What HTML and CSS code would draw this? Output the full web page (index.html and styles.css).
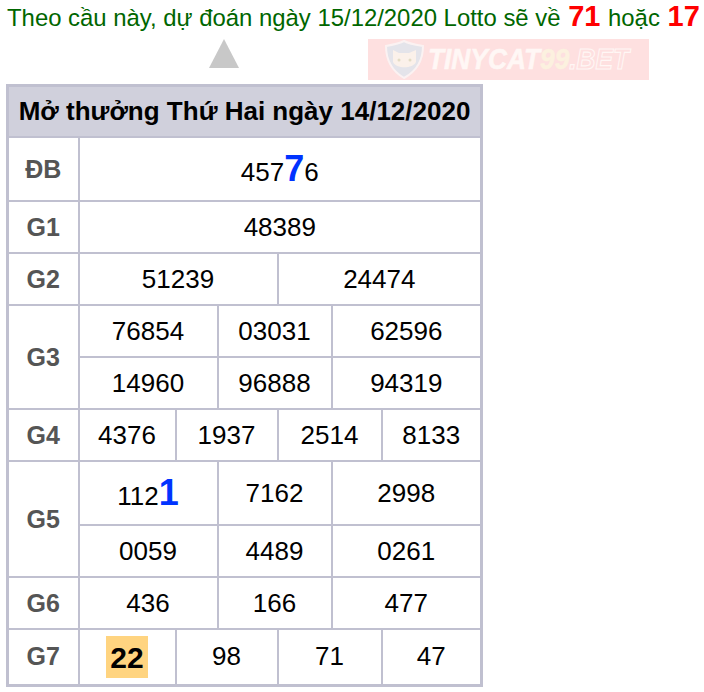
FILE: index.html
```html
<!DOCTYPE html>
<html lang="vi">
<head>
<meta charset="utf-8">
<title>Lotto</title>
<link rel="stylesheet" href="styles.css">
</head>
<body>
<p class="headline">Theo cầu này, dự đoán ngày 15/12/2020 Lotto sẽ về <b class="hot">71</b> hoặc <b class="hot">17</b></p>
<div class="marks">
  <div class="arrow"></div>
  <div class="banner">
    <svg class="shield" width="41" height="39" viewBox="0 0 41 39"><path d="M20 1 C26 4 33 5 39 6 C39 20 33 31 20 38 C8 31 2 20 2 6 C8 5 14 4 20 1Z" fill="#e4e4ea" stroke="#fbf2f2" stroke-width="2"/><path d="M9 10 L15 13 H25 L32 10 L32 22 C29 29 12 29 9 22Z" fill="#fbf1ea"/><circle cx="15" cy="20" r="1.5" fill="#e3dcc4"/><circle cx="26" cy="20" r="1.5" fill="#e3dcc4"/></svg>
    <span class="brand">TINYCAT<span class="brand-gold">99</span><span class="brand-out">.BET</span></span>
  </div>
</div>
<table class="results">
  <colgroup>
    <col class="c0"><col class="c1"><col class="c2"><col class="c3"><col class="c4"><col class="c5"><col class="c6">
  </colgroup>
  <tr class="r-head"><th colspan="7" class="title">Mở thưởng Thứ Hai ngày 14/12/2020</th></tr>
  <tr class="r-db"><th class="label">ĐB</th><td colspan="6">457<b class="blue">7</b>6</td></tr>
  <tr class="r-s"><th class="label">G1</th><td colspan="6">48389</td></tr>
  <tr class="r-s"><th class="label">G2</th><td colspan="3">51239</td><td colspan="3">24474</td></tr>
  <tr class="r-s"><th class="label" rowspan="2">G3</th><td colspan="2">76854</td><td colspan="2">03031</td><td colspan="2">62596</td></tr>
  <tr class="r-s"><td colspan="2">14960</td><td colspan="2">96888</td><td colspan="2">94319</td></tr>
  <tr class="r-s"><th class="label">G4</th><td>4376</td><td colspan="2">1937</td><td colspan="2">2514</td><td>8133</td></tr>
  <tr class="r-db"><th class="label" rowspan="2">G5</th><td colspan="2">112<b class="blue">1</b></td><td colspan="2">7162</td><td colspan="2">2998</td></tr>
  <tr class="r-s"><td colspan="2">0059</td><td colspan="2">4489</td><td colspan="2">0261</td></tr>
  <tr class="r-s"><th class="label">G6</th><td colspan="2">436</td><td colspan="2">166</td><td colspan="2">477</td></tr>
  <tr class="r-l"><th class="label">G7</th><td><b class="pick">22</b></td><td colspan="2">98</td><td colspan="2">71</td><td>47</td></tr>
</table>
</body>
</html>
```
FILE: styles.css
```css
html, body { margin: 0; padding: 0; background: #fff; }
body { font-family: "Liberation Sans", Arial, sans-serif; color: #000; }
.headline { margin: 0; padding: 2px 0 0 7px; height: 30px; font-size: 23.9px; line-height: 30px; color: #006600; white-space: nowrap; }
.hot { color: #ff0000; font-size: 29px; line-height: 1; margin: 0 1px; }
.marks { display: flex; align-items: flex-start; height: 52px; padding-top: 7px; box-sizing: border-box; }
.arrow { margin: 0 0 0 209px; width: 0; height: 0; border-left: 15px solid transparent; border-right: 15px solid transparent; border-bottom: 29px solid #c8c8c8; }
.banner { margin-left: 129px; width: 281px; height: 41px; background: #fee0e0; display: flex; align-items: center; gap: 3px; padding-left: 16px; box-sizing: border-box; }
.brand { display: inline-block; font-size: 26.3px; font-weight: bold; font-style: italic; color: #fff7f5; -webkit-text-stroke: 0.5px #fff7f5; transform: scaleY(1.15); white-space: nowrap; }
.brand-gold { color: #fcf1df; -webkit-text-stroke: 0.5px #fcf1df; }
.brand-out { color: #fee0e0; -webkit-text-stroke: 1px #fff7f5; }
.results { border-collapse: collapse; table-layout: fixed; width: 475px; margin-left: 6px; border: 3px solid #c0c0d0; font-size: 26px; }
.results th, .results td { border: 2px solid #c0c0d0; padding: 0; text-align: center; font-weight: normal; }
.c0 { width: 71px; } .c1 { width: 97px; } .c2 { width: 42px; } .c3 { width: 60px; } .c4 { width: 54px; } .c5 { width: 50px; } .c6 { width: 100px; }
.results .title { background: #d0d0dc; font-size: 26px; font-weight: bold; height: 49px; }
.results .label { font-weight: bold; color: #555555; font-size: 25px; }
.r-db { height: 64px; } .r-s { height: 52px; } .r-l { height: 56px; }
.blue { color: #0033ff; font-size: 36px; font-weight: bold; line-height: 1; }
.pick { display: inline-block; background: #ffd480; width: 42px; height: 42px; line-height: 44px; font-size: 30px; vertical-align: middle; }
```
